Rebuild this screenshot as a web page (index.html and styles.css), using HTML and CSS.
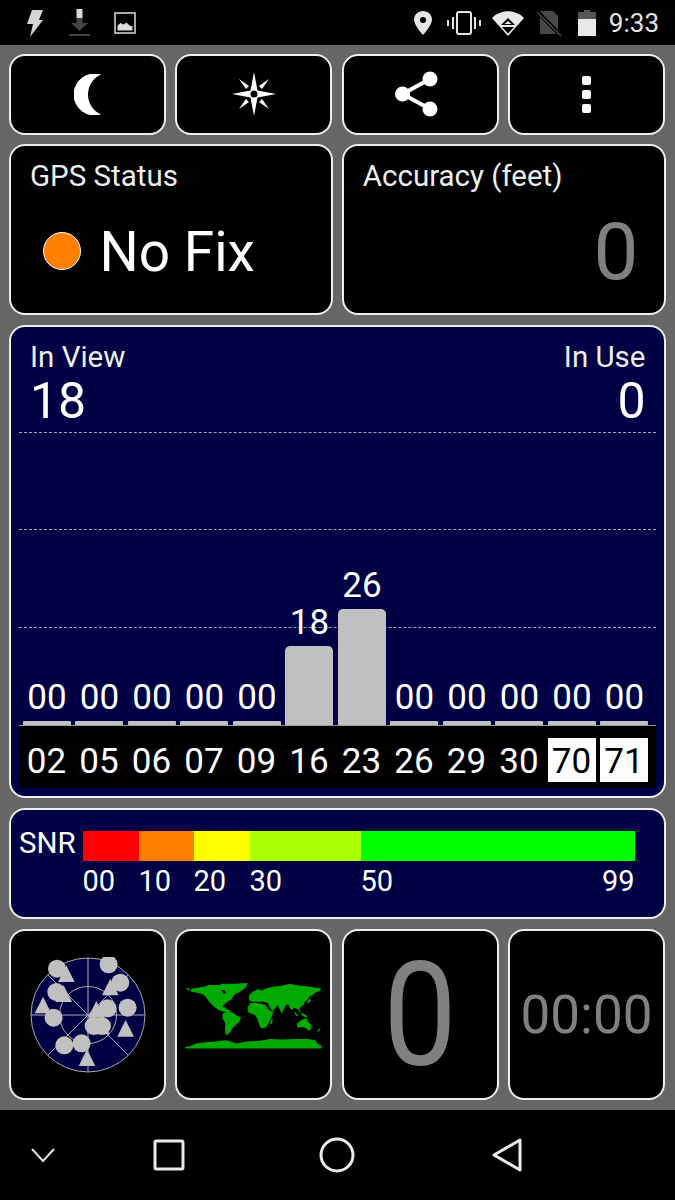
FILE: index.html
```html
<!DOCTYPE html>
<html lang="en">
<head>
<meta charset="utf-8">
<title>GPS Status</title>
<link rel="stylesheet" href="styles.css">
</head>
<body>
<header class="status">
  <div class="status-left">
    <svg class="s-bolt" width="16" height="28" viewBox="0 0 16 28"><path d="M5 1h11l-4 10h4L3 28l3-13H0z" fill="#d4d4d4"/></svg>
    <svg class="s-dl" width="21" height="28" viewBox="0 0 21 28"><path d="M7.500 0h6v9h-6z" fill="#d8d8d8"/><path d="M7.500 9h6v5h5.500L10.500 22 2 14h5.500z" fill="#444"/><path d="M0 25h21v2H0z" fill="#444"/></svg>
    <svg class="s-img" width="22" height="22" viewBox="0 0 22 22"><rect x="1" y="1" width="20" height="20" fill="none" stroke="#ddd" stroke-width="1.500"/><path d="M3.500 18.500v-5l3-2.500 3 1.500 3-2 3 3 3 1v4z" fill="#ddd"/></svg>
  </div>
  <div class="status-right">
    <svg class="s-pin" width="20" height="26" viewBox="0 0 20 26"><path fill-rule="evenodd" d="M10 1c5 0 9 3.800 9 8.800C19 15.500 10 25 10 25S1 15.500 1 9.800C1 4.800 5 1 10 1zm0 6a3 3 0 1 0 0 6 3 3 0 0 0 0-6z" fill="#e4e4e4"/></svg>
    <svg class="s-vib" width="36" height="26" viewBox="0 0 36 26"><rect x="11" y="2" width="14" height="22" rx="2" fill="none" stroke="#e4e4e4" stroke-width="2"/><path d="M6 7h2v12H6zM1 10h2v6H1zM28 7h2v12h-2zM33 10h2v6h-2z" fill="#e4e4e4"/></svg>
    <svg class="s-wifi" width="34" height="28" viewBox="0 0 34 28"><path d="M1 9C9 0 25 0 33 9L17 27z" fill="#e8e8e8"/><path d="M17 9l7 7H10z" fill="#000"/><path d="M17 12l3.500 3h-7z" fill="#e8e8e8"/><path d="M11 18h12l-6 6.500z" fill="#000"/></svg>
    <svg class="s-sim" width="26" height="28" viewBox="0 0 26 28"><path d="M4 2h13l5 5v18H4z" fill="#484848"/><path d="M0 1l26 27" stroke="#000" stroke-width="4"/><path d="M1 3l24 24" stroke="#484848" stroke-width="1.500"/></svg>
    <svg class="s-bat" width="18" height="28" viewBox="0 0 18 28"><path d="M6 1h6v3H6zM0 3h18v7H0z" fill="#555"/><path d="M0 10h18v17H0z" fill="#e8e8e8"/></svg>
    <span class="clock">9:33</span>
  </div>
</header>

<main class="app">
  <section class="row four">
    <div class="card btn"><svg width="27" height="41" viewBox="0 0 27 41"><path d="M27 .5A21 21 0 1 0 27 40.500 21.900 21.900 0 0 1 27 .5z" fill="#fff"/></svg></div>
    <div class="card btn"><svg width="44" height="44" viewBox="0 0 44 44"><path fill-rule="evenodd" d="M22 0l3.500 18.500L44 22l-18.500 3.500L22 44l-3.500-18.500L0 22l18.500-3.500zm0 18.500a3.500 3.500 0 1 0 0 7 3.500 3.500 0 0 0 0-7z" fill="#fff"/><path d="M7 7l10 7-3 3zM37 7l-7 10-3-3zM7 37l7-10 3 3zM37 37l-10-7 3-3z" fill="#fff"/></svg></div>
    <div class="card btn"><svg class="share" width="44" height="46" viewBox="0 0 44 46"><path d="M35 8L7.500 23 35 38" fill="none" stroke="#fff" stroke-width="4"/><circle cx="35" cy="8" r="7.500" fill="#fff"/><circle cx="7.500" cy="23" r="7.500" fill="#fff"/><circle cx="35" cy="38" r="7.500" fill="#fff"/></svg></div>
    <div class="card btn"><div class="dots"><i></i><i></i><i></i></div></div>
  </section>

  <section class="row two">
    <div class="card info">
      <div class="info-title">GPS Status</div>
      <div class="fix"><span class="dot"></span><span class="fix-text">No Fix</span></div>
    </div>
    <div class="card info">
      <div class="info-title">Accuracy (feet)</div>
      <div class="acc">0</div>
    </div>
  </section>

  <section class="card navy chart">
    <div class="chart-head">
      <div><div class="label">In View</div><div class="big">18</div></div>
      <div class="right"><div class="label">In Use</div><div class="big">0</div></div>
    </div>
    <div class="plot">
      <div class="grid"></div><div class="grid"></div><div class="grid"></div>
      <div class="bars">
        <div class="barcol"><span>00</span><b class="b0"></b></div>
        <div class="barcol"><span>00</span><b class="b0"></b></div>
        <div class="barcol"><span>00</span><b class="b0"></b></div>
        <div class="barcol"><span>00</span><b class="b0"></b></div>
        <div class="barcol"><span>00</span><b class="b0"></b></div>
        <div class="barcol"><span>18</span><b class="b18"></b></div>
        <div class="barcol"><span>26</span><b class="b26"></b></div>
        <div class="barcol"><span>00</span><b class="b0"></b></div>
        <div class="barcol"><span>00</span><b class="b0"></b></div>
        <div class="barcol"><span>00</span><b class="b0"></b></div>
        <div class="barcol"><span>00</span><b class="b0"></b></div>
        <div class="barcol"><span>00</span><b class="b0"></b></div>
      </div>
    </div>
    <div class="ids">
      <span>02</span><span>05</span><span>06</span><span>07</span><span>09</span><span>16</span><span>23</span><span>26</span><span>29</span><span>30</span><span class="on">70</span><span class="on">71</span>
    </div>
  </section>

  <section class="card navy snr">
    <div class="snr-label">SNR</div>
    <div class="snr-main">
      <div class="scale"><i class="c1"></i><i class="c2"></i><i class="c3"></i><i class="c4"></i><i class="c5"></i></div>
      <div class="ticks"><span class="t1">00</span><span class="t2">10</span><span class="t3">20</span><span class="t4">30</span><span class="t5">50</span><span class="t6">99</span></div>
    </div>
  </section>

  <section class="row four bottom">
    <div class="card btn">
      <svg width="116" height="116" viewBox="0 0 116 116">
        <circle cx="58" cy="58" r="57" fill="#000044" stroke="#aaa" stroke-width="1"/>
        <circle cx="58" cy="58" r="28.500" fill="none" stroke="#aaa" stroke-width="1"/>
        <path d="M58 1v114M1 58h114M17.700 17.700l80.600 80.600M17.700 98.300l80.600-80.600" stroke="#aaa" stroke-width="1"/>
        <g fill="#c0c0c0">
          <circle cx="27" cy="11.700" r="9"/><circle cx="78.600" cy="7.300" r="9"/><circle cx="90.300" cy="25.700" r="9"/>
          <circle cx="26.300" cy="35" r="9"/><circle cx="23.600" cy="60.700" r="9"/><circle cx="77.600" cy="51.300" r="9"/>
          <circle cx="97.600" cy="50.700" r="9"/><circle cx="63.600" cy="69" r="9"/><circle cx="72" cy="69" r="9"/>
          <circle cx="34.300" cy="88.300" r="9"/><circle cx="51.600" cy="86.300" r="9"/>
          <path d="M36.300 8.300l8.300 16.700H28z"/><path d="M80.300 21.700l8.300 16.600H72z"/><path d="M33.600 28.300l8.400 16.700H25.300z"/>
          <path d="M13 39.700l8.300 16.600H4.700z"/><path d="M66.300 44l8.400 16.700H58z"/><path d="M95.600 63l8.400 16.700H87.300z"/>
          <path d="M71.300 60.700l8.400 16.600H63z"/><path d="M57 92.300l8.300 16.700H48.700z"/>
        </g>
      </svg>
    </div>
    <div class="card btn">
      <svg class="world" width="137" height="66" viewBox="30 40 412 198">
        <path fill="#00aa00" fill-rule="evenodd" d="M30 57L42 55 46 62 52 56 90 50 100 46 135 46 140 42 175 42 218 40 214 52 204 60 192 68 182 72 174 82 168 90 158 96 150 102 144 108 146 114 152 112 154 118 162 120 170 124 158 128 144 126 130 120 118 112 108 102 98 90 92 80 84 74 72 70 60 68 50 66 44 62ZM140 60L150 62 154 70 146 72 142 66Z"/>
        <path fill="#00aa00" d="M146 130L160 126 176 130 186 138 198 142 194 156 182 166 174 174 166 186 158 196 152 194 150 176 152 162 144 148 142 136Z"/>
        <path fill="#00aa00" d="M222 78L234 66 250 58 262 62 270 58 290 52 320 48 345 42 360 46 400 50 440 56 436 64 422 68 414 76 404 80 400 88 390 96 388 104 378 112 372 120 358 114 352 122 346 116 340 104 332 108 326 122 320 132 316 120 308 106 302 116 292 124 284 110 278 100 262 95 254 97 246 96 236 96 224 94 222 84Z"/>
        <path fill="#00aa00" d="M218 114L226 101 240 99 262 102 272 106 280 118 290 126 298 124 290 142 286 152 280 162 272 174 258 176 252 162 248 148 240 136 230 132 220 128Z"/>
        <path fill="#00aa00" d="M288 152L294 148 292 162 286 164ZM366 162L376 154 382 150 392 146 398 148 400 156 410 166 410 176 402 184 394 176 384 172 368 174ZM356 124L364 130 372 140 364 138ZM376 128L390 134 402 144 384 140ZM372 116L378 124 374 128ZM428 182L438 174 436 180 430 188ZM398 94L406 86 408 94 400 102Z"/>
        <path fill="#00aa00" d="M30 232L46 230 62 222 90 218 120 216 150 212 165 215 185 222 215 216 250 214 285 208 320 210 360 208 400 208 422 212 428 222 440 228 440 237 30 237Z"/>
      </svg>
    </div>
    <div class="card btn"><span class="count">0</span></div>
    <div class="card btn"><span class="timer">00:00</span></div>
  </section>
</main>

<footer class="nav">
  <svg class="n1" width="26" height="16" viewBox="0 0 26 16"><path d="M2 2l11 12L24 2" fill="none" stroke="#e0e0e0" stroke-width="2"/></svg>
  <svg class="n2" width="32" height="32" viewBox="0 0 32 32"><rect x="2" y="2" width="28" height="28" rx="1.500" fill="none" stroke="#eaeaea" stroke-width="3"/></svg>
  <svg class="n3" width="36" height="36" viewBox="0 0 36 36"><circle cx="18" cy="18" r="16" fill="none" stroke="#eaeaea" stroke-width="3"/></svg>
  <svg class="n4" width="32" height="36" viewBox="0 0 32 36"><path d="M29 3v30L3 18z" fill="none" stroke="#eaeaea" stroke-width="3" stroke-linejoin="round"/></svg>
</footer>
</body>
</html>
```
FILE: styles.css
```css
* { box-sizing: border-box; }
html, body { margin: 0; padding: 0; }
body { width: 675px; height: 1200px; background: #666; font-family: Roboto, "Liberation Sans", sans-serif; color: #fff; overflow: hidden; display: flex; flex-direction: column; }

.status { height: 45px; background: #000; display: flex; justify-content: space-between; align-items: center; padding: 0 16px 0 27px; flex: none; }
.status-left { display: flex; align-items: center; }
.status-right { display: flex; align-items: center; }
.s-dl { margin-left: 26px; }
.s-img { margin-left: 24px; }
.s-vib { margin-left: 13px; }
.s-wifi { margin-left: 9px; }
.s-sim { margin-left: 11px; }
.s-bat { margin-left: 16px; }
.clock { font-size: 26px; color: #e4e4e4; margin-left: 13px; }

.app { flex: none; height: 1064.500px; padding: 8.500px 9.500px 0 9px; display: flex; flex-direction: column; gap: 9.875px; }
.card { background: #000; border: 2.500px solid #eee; border-radius: 16px; }
.navy { background: #000044; }
.row { display: grid; }
.four { grid-template-columns: repeat(4, 157px); column-gap: 9.330px; }
.two { grid-template-columns: repeat(2, 323.750px); column-gap: 9px; }
.btn { height: 81px; display: flex; align-items: center; justify-content: center; }
.share { margin-right: 6px; }
.dots { display: flex; flex-direction: column; gap: 5px; }
.dots i { width: 9px; height: 9px; background: #fff; border-radius: 2px; display: block; }

.info { height: 171px; padding: 13px 19px; }
.info-title { font-size: 29.500px; line-height: 34px; color: #eee; }
.fix { display: flex; align-items: center; margin-top: 26px; margin-left: 12.500px; gap: 18px; }
.dot { width: 38px; height: 38px; border-radius: 50%; background: #ff8000; border: 1px solid #fff; }
.fix-text { font-size: 55px; line-height: 62px; padding-top: 2px; margin-left: 1px; }
.acc { font-size: 80px; line-height: 92px; color: #808080; text-align: right; margin-right: 6px; margin-top: 13px; }

.chart { height: 473px; padding: 13px 0 0; display: flex; flex-direction: column; }
.chart-head { display: flex; justify-content: space-between; padding: 0 18px 0 19px; }
.right { text-align: right; }
.label { font-size: 29.500px; line-height: 34px; color: #eee; }
.big { font-size: 50px; line-height: 54px; }
.plot { position: relative; height: 294px; margin: 3.500px 8px 0; border-bottom: 1px solid #999; }
.grid { height: 97.500px; border-top: 1px dashed #aaa; width: 100%; }
.bars { position: absolute; left: 3.500px; right: 0; bottom: 0; display: grid; grid-template-columns: repeat(12, 48px); column-gap: 4.500px; align-items: end; }
.barcol { display: flex; flex-direction: column; align-items: center; }
.barcol span { font-size: 35px; line-height: 40px; margin-bottom: 3px; margin-left: 1px; }
.barcol b { display: block; width: 100%; background: #c0c0c0; border-radius: 5px 5px 0 0; }
.barcol .b0 { height: 4px; border-radius: 1px 1px 0 0; }
.b18 { height: 79px; }
.b26 { height: 116px; }
.ids { height: 62px; margin: 0 8px; background: #000; display: grid; grid-template-columns: repeat(12, 48px); column-gap: 4.500px; padding: 12px 0 6px 3.500px; }
.ids span { height: 44px; font-size: 35px; line-height: 48px; text-align: center; }
.ids .on { background: #fff; color: #000; }

.snr { height: 111px; display: flex; padding: 0 0 0 8px; }
.snr-label { font-size: 29.500px; line-height: 32px; width: 63.500px; padding-top: 16.500px; }
.snr-main { width: 552px; padding-top: 20.500px; }
.scale { height: 30px; display: flex; }
.scale i { display: block; height: 100%; }
.c1 { width: 56px; background: #ff0000; }
.c2 { width: 55px; background: #ff8000; }
.c3 { width: 56px; background: #ffff00; }
.c4 { width: 111px; background: #aaff00; }
.c5 { width: 274px; background: #00ff00; }
.ticks { position: relative; height: 40px; font-size: 29px; line-height: 40px; }
.ticks span { position: absolute; top: 0; }
.t1 { left: 0; } .t2 { left: 56px; } .t3 { left: 111px; } .t4 { left: 167px; } .t5 { left: 278px; } .t6 { right: 0; }

.bottom .btn { height: 171px; }
.world { margin-top: 3px; }
.count { font-size: 131px; color: #808080; line-height: 1; transform: scaleY(1.1); margin-top: 4px; }
.timer { font-size: 53px; color: #808080; }

.nav { flex: none; height: 90.500px; background: #000; display: flex; align-items: center; }
.n1 { margin-left: 30px; }
.n2 { margin-left: 97px; }
.n3 { margin-left: 134px; }
.n4 { margin-left: 136px; }
```
